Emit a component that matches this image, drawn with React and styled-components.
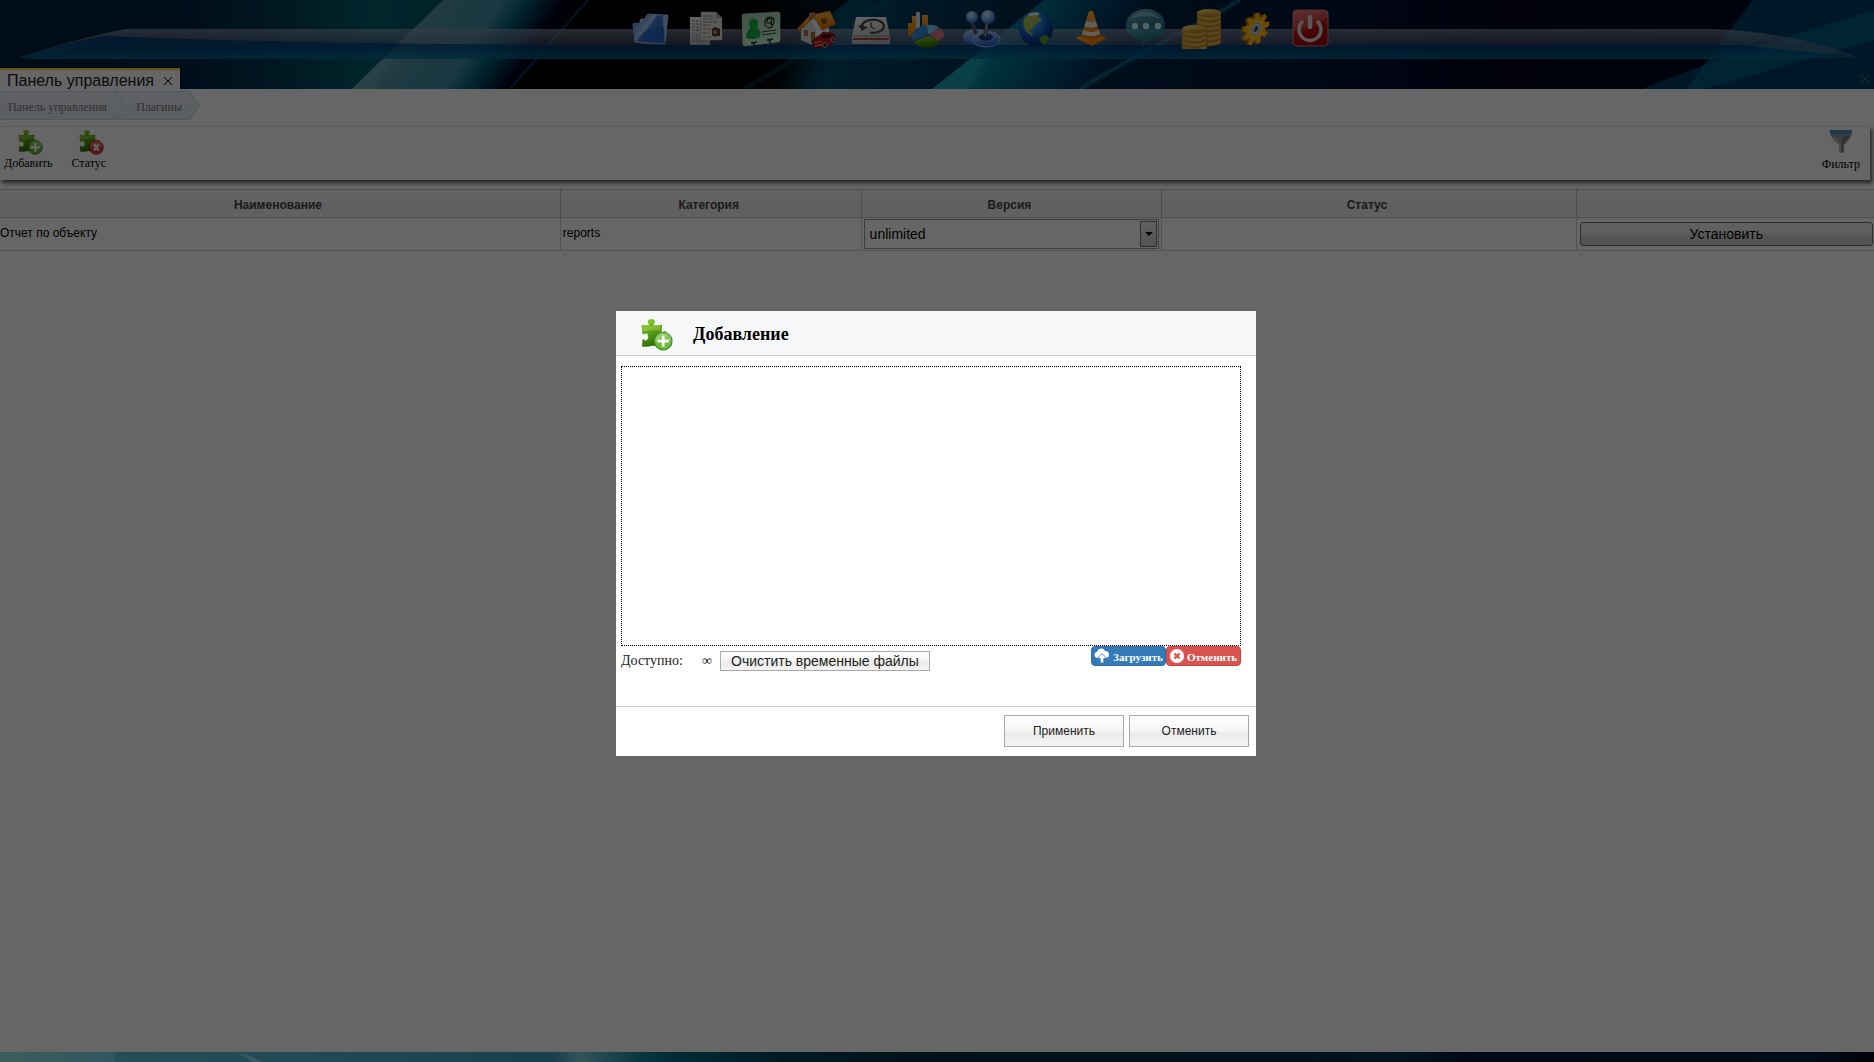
import React from "react";
import styled, { createGlobalStyle } from "styled-components";

const sans = '"Liberation Sans", Arial, sans-serif';
const serif = '"Liberation Serif", "Times New Roman", serif';

const GlobalStyle = createGlobalStyle`
  *, *::before, *::after { box-sizing: border-box; }
  body { margin: 0; font-family: ${serif}; font-size: 12px; overflow: hidden; }
  button, select { font-family: ${sans}; color: #000; margin: 0; }
`;

const Desktop = styled.div`
  display: flex;
  flex-direction: column;
  height: 100vh;
  background: #001e3c;
`;

const Header = styled.header`
  display: grid;
  height: 89px;
  flex: none;
  > * { grid-area: 1 / 1; min-width: 0; }
`;

const Backdrop = styled.svg`
  display: block;
  width: 100%;
  height: ${(p) => p.$height}px;
`;

const HeaderContent = styled.div`
  display: flex;
  flex-direction: column;
  justify-content: space-between;
  z-index: 1;
`;

const Dock = styled.nav`
  display: flex;
  justify-content: center;
  gap: 15px;
  padding: 9px 0 0 88px;
`;

const DockLink = styled.a`
  display: block;
  width: 40px;
  height: 40px;
  svg { display: block; }
`;

const TabBar = styled.div`
  display: flex;
  justify-content: space-between;
  align-items: center;
  height: 21px;
`;

const Tab = styled.div`
  display: flex;
  align-items: center;
  gap: 8px;
  height: 23px;
  margin-bottom: -2px;
  padding: 0 6px 0 7px;
  border-top: 2px solid #ffcc33;
  background: #fff;
  color: #222;
  font: 16px/20px ${sans};
  white-space: nowrap;
`;

const CloseButton = styled.button`
  display: grid;
  place-items: center;
  width: 12px;
  height: 12px;
  padding: 0;
  border: 0;
  background: none;
  color: ${(p) => p.$color || "#000"};
  margin-right: ${(p) => (p.$edge ? 3 : 0)}px;
`;

const Main = styled.main`
  flex: 1;
  min-height: 0;
  background: #fff;
`;

const Crumbs = styled.nav`
  display: flex;
  padding-top: 2px;
  height: 37px;
`;

const crumbShape = "polygon(0 0, calc(100% - 10px) 0, 100% 50%, calc(100% - 10px) 100%, 0 100%)";

const Crumb = styled.a`
  display: block;
  height: 29px;
  margin-right: -10px;
  padding: 1px;
  padding-left: 0;
  position: relative;
  z-index: ${(p) => p.$level};
  background: #c6dcef;
  clip-path: ${crumbShape};
  text-decoration: none;
  span {
    display: block;
    height: 27px;
    padding: 2px 17px 0 ${(p) => (p.$first ? 8 : 21)}px;
    background: linear-gradient(#eef3f8, #e2eaf2);
    clip-path: ${crumbShape};
    color: #777;
    font: 12px/26px ${serif};
    white-space: nowrap;
  }
`;

const Toolbar = styled.div`
  display: flex;
  justify-content: space-between;
  height: 54px;
  margin-right: 4px;
  padding: 3px 10px 0 4px;
  border-top: 1px solid #dbe6f2;
  background: #fff;
  box-shadow: 2px 3px 4px 0 rgba(0, 0, 0, 0.65);
`;

const ToolGroup = styled.div`
  display: flex;
  gap: 19px;
`;

const ToolButton = styled.button`
  display: flex;
  flex-direction: column;
  align-items: center;
  gap: 1px;
  padding: 0;
  border: 0;
  background: none;
  font: 12px/14px ${serif};
  svg { display: block; margin-left: ${(p) => (p.$badge ? 5 : 0)}px; }
`;

const Grid = styled.table`
  width: 100%;
  margin-top: 9px;
  border-collapse: collapse;
  table-layout: fixed;
  font: 12px/14px ${sans};
`;

const HeadCell = styled.th`
  width: ${(p) => p.$width};
  height: 28px;
  padding: 2px 4px 0 0;
  border: 1px solid #c0c4c6;
  border-width: 1px 1px 1px 0;
  background: linear-gradient(#fcfcfc, #eee 60%, #f3f3f3);
  color: #444;
  &:last-child { border-right: 0; }
`;

const Cell = styled.td`
  height: 33px;
  padding: 0 ${(p) => (p.$flush ? 1 : 2)}px;
  padding-bottom: ${(p) => (p.$text ? 2 : 0)}px;
  border: 1px solid #d0d0d0;
  border-width: 0 1px 1px 0;
  &:first-child { padding-left: 0; }
  &:last-child { border-right: 0; padding-left: 3px; }
`;

const SelectBox = styled.div`
  display: grid;
  grid-template-columns: 1fr 17px;
  height: 30px;
  padding: 1px;
  border: 1px solid #999;
`;

const VersionSelect = styled.select`
  grid-area: 1 / 1 / 2 / 3;
  appearance: none;
  width: 100%;
  height: 26px;
  padding: 0 4px;
  border: 0;
  border-radius: 0;
  background: #fff;
  font-size: 14px;
`;

const SelectArrow = styled.span`
  grid-area: 1 / 2;
  display: grid;
  place-items: center;
  border: 1px solid #777;
  background: linear-gradient(#f2f2f2, #cfcfcf);
  pointer-events: none;
  z-index: 1;
`;

const InstallButton = styled.button`
  display: block;
  width: 100%;
  height: 24px;
  padding: 0;
  border: 1px solid #707070;
  border-radius: 3px;
  background: linear-gradient(#f3f3f3, #ebebeb 50%, #dcdcdc 50%, #cdcdcd);
  font-size: 14px;
`;

const Overlay = styled.div`
  position: fixed;
  inset: 0;
  z-index: 10;
  display: flex;
  align-items: center;
  justify-content: center;
  padding-top: 4px;
  background: rgba(0, 0, 0, 0.6);
`;

const Dialog = styled.section`
  width: 640px;
  margin-right: 2px;
  background: #fff;
`;

const DialogHead = styled.header`
  display: flex;
  align-items: center;
  gap: 20px;
  height: 45px;
  padding: 4px 25px 0;
  border-bottom: 1px solid #ccc;
  background: #f6f8fa;
`;

const DialogTitle = styled.h2`
  margin: 0;
  padding-bottom: 2px;
  font: bold 18px/20px ${serif};
`;

const DialogBody = styled.div`
  height: 350px;
  padding: 10px 15px 0 5px;
`;

const DropZone = styled.div`
  height: 280px;
  border: 1px dotted #000;
`;

const UploadRow = styled.div`
  display: flex;
  align-items: flex-start;
  justify-content: space-between;
`;

const Quota = styled.div`
  display: flex;
  align-items: center;
  padding-top: 5px;
  color: #222;
  font: 14px/20px ${serif};
`;

const QuotaValue = styled.span`
  margin: 0 8px 0 19px;
`;

const PlainButton = styled.button`
  width: ${(p) => (p.$wide ? 210 : 120)}px;
  height: ${(p) => (p.$wide ? 20 : 32)}px;
  padding: 0;
  border: 1px solid #a9a9a9;
  background: linear-gradient(#fff, #f6f6f6 45%, #ebebeb 60%, #f4f4f4);
  color: #222;
  font-size: ${(p) => (p.$wide ? 14 : 12)}px;
  line-height: 16px;
  white-space: nowrap;
`;

const UploadActions = styled.div`
  display: flex;
`;

const ColorButton = styled.button`
  display: flex;
  align-items: center;
  justify-content: center;
  gap: 3px;
  width: 75px;
  height: 20px;
  padding: 0;
  border: 1px solid ${(p) => (p.$danger ? "#d43f3a" : "#2e6da4")};
  border-radius: 4px;
  background: ${(p) => (p.$danger ? "#d9534f" : "#337ab7")};
  color: #fff;
  font: bold 11px/18px ${serif};
  span { padding-top: 2px; }
  svg { flex: none; }
`;

const DialogFoot = styled.footer`
  display: flex;
  justify-content: flex-end;
  gap: 5px;
  height: 50px;
  padding: 8px 7px 0;
  border-top: 1px solid #ccc;
`;

function Defs() {
  const grads = [
    ["gBlue", "#b9dcff", "#1c5fc4"],
    ["gGreen", "#93d428", "#2c6f08"],
    ["gGold", "#ffe98a", "#c3841a"],
    ["gOrange", "#ffc04d", "#e87400"],
    ["gRed", "#ef8080", "#9c0000"],
    ["gSilver", "#ffffff", "#b5b5b5"],
    ["gTeal", "#9ce4ec", "#067a8c"],
    ["gMint", "#a8c9b0", "#c9f2d2"],
  ];
  return (
    <svg width="0" height="0" style={{ position: "absolute" }} aria-hidden="true">
      <defs>
        {grads.map(([id, a, b]) => (
          <linearGradient key={id} id={id} x1="0" y1="0" x2="0.3" y2="1">
            <stop offset="0" stopColor={a} />
            <stop offset="1" stopColor={b} />
          </linearGradient>
        ))}
        <radialGradient id="gSea" cx="0.4" cy="0.3" r="0.75">
          <stop offset="0" stopColor="#55b4ff" />
          <stop offset="0.6" stopColor="#0b50b4" />
          <stop offset="1" stopColor="#021b58" />
        </radialGradient>
        <radialGradient id="gBall" cx="0.4" cy="0.3" r="0.7">
          <stop offset="0" stopColor="#d5ecff" />
          <stop offset="1" stopColor="#2873c8" />
        </radialGradient>
        <linearGradient id="gFolder" x1="0" y1="0" x2="1" y2=".7">
          <stop offset="0" stopColor="#3f6fc0" />
          <stop offset=".5" stopColor="#a8ccf4" />
          <stop offset=".55" stopColor="#3f80d8" />
          <stop offset="1" stopColor="#2a66c4" />
        </linearGradient>
      </defs>
    </svg>
  );
}

function Coins({ x, y, n, w }) {
  return Array.from({ length: n }, (_, k) => n - 1 - k).map((k) => (
    <g key={k}>
      <path
        d={`M${x} ${y + k * 5}v4a${w / 2} 4 0 0 0 ${w} 0v-4z`}
        fill="#e0aa4a"
        stroke="#8c5c1c"
        strokeWidth=".6"
      />
      <ellipse cx={x + w / 2} cy={y + k * 5} rx={w / 2} ry="4" fill="url(#gGold)" stroke="#b98a38" strokeWidth=".6" />
    </g>
  ));
}

const gearPath = (() => {
  const pts = [];
  for (let i = 0; i < 9; i++) {
    [[-0.28, 11.5], [-0.14, 16.5], [0.14, 16.5], [0.28, 11.5]].forEach(([da, r]) => {
      const a = (i * 2 * Math.PI) / 9 + da;
      pts.push(`${(r * Math.cos(a)).toFixed(1)} ${(r * Math.sin(a)).toFixed(1)}`);
    });
  }
  return `M${pts.join("L")}Z`;
})();

const dockItems = [
  ["Файлы", (
    <>
      <path d="M9 12l1-2h5l2-4h20l-3 28H11z" fill="#a9bfec" stroke="#d4e2ff" strokeWidth=".7" />
      <path d="M2 15l8-1 7-9 15 1 2 29-30-2z" fill="url(#gFolder)" stroke="#8ebbff" />
      <path d="M5 32C10 22 20 18 33 17l1 17z" fill="#1a5cb8" opacity=".45" />
    </>
  )],
  ["Документы", (
    <>
      <path d="M4 8h20v28H4z" fill="url(#gSilver)" />
      <path d="M6 12h11M6 15h10M6 18h11M6 21h9M6 26h12M6 29h10M6 32h12" stroke="#888" strokeDasharray="3 1" />
      <path d="M15 3h15l6 6v22H15z" fill="#e7e2dc" stroke="#b5b0aa" strokeWidth=".5" />
      <path d="M30 3v6h6z" fill="#aaa" />
      <path d="M17 7h11M17 10h12M17 13h15M17 16h7M17 20h8M17 24h7M17 28h16" stroke="#888" strokeDasharray="4 1" />
      <path d="M26 20l3-2 5 2v7h-8z" fill="#503a2c" />
      <circle cx="29" cy="23" r="2" fill="#b99778" />
    </>
  )],
  ["Контакты", (
    <>
      <path d="M1 7q0-2 2-2l34-2q2 0 2 2v26q0 2-2 2l-33 4q-2 0-2-2z" fill="url(#gMint)" stroke="#c6ebce" strokeWidth=".6" />
      <ellipse cx="12.500" cy="15" rx="4.500" ry="5.500" fill="#18b34a" />
      <path d="M10 18h6q5 4 3 10-7 4-14 1 0-7 5-11z" fill="#18b34a" />
      <path d="M32 17q-5 4-8-1-1-6 4-8 6 0 5 5-1 4-3 2l1-5q-4-2-5 2 0 4 4 1" fill="none" stroke="#1e2b21" strokeWidth="1.2" />
      <path d="M21 23l14-2M21 26l14-2" stroke="#28452f" strokeWidth="1" />
      <path d="M10 34l6-1m-3 0v4M26 31l6-1m-3 0v4" stroke="#1f3324" strokeWidth="1.600" />
    </>
  )],
  ["Имущество", (
    <>
      <path d="M5 18l13-9 15 10v14l-14 4L5 31z" fill="#f4f4f4" />
      <path d="M5 18l9-8 6 10v17L5 31z" fill="#d8d8d8" />
      <path d="M1 20L14 6l20-4 6 13-14 6-8-13L3 22z" fill="url(#gOrange)" stroke="#9c5300" strokeWidth=".6" />
      <path d="M13 4l6-1v5l-6 3z" fill="#c07a4c" />
      <circle cx="28" cy="12" r="3" fill="#7b5a2a" />
      <path d="M8 21h4v6H8zM15 23h4v10h-4z" fill="#a0703a" />
      <path d="M16 34q1-5 7-7l4-4 9 1q5 3 3 8l-8 6-13 1z" fill="#b81818" stroke="#5a0000" strokeWidth=".6" />
      <path d="M26 26l8-1 2 3-10 2z" fill="#291010" />
      <path d="M18 34l8-2M19 37l9-2" stroke="#e49a9a" />
      <circle cx="29" cy="36" r="2.300" fill="#222" stroke="#ccc" strokeWidth=".8" />
      <circle cx="37" cy="31" r="2" fill="#222" stroke="#ccc" strokeWidth=".8" />
    </>
  )],
  ["Резервное копирование", (
    <>
      <path d="M5 8h30l4 19v7q0 1-1 1H2q-1 0-1-1v-7z" fill="url(#gSilver)" />
      <path d="M2 29h36v2H2z" fill="#a04848" />
      <path d="M1 27h38" stroke="#8a8a8a" />
      <path d="M12 20a11 6.500 0 1 1 7 3.500" fill="none" stroke="#444" strokeWidth="2.200" />
      <path d="M7 16l4 6 6-4z" fill="#444" />
      <path d="M20 13v5l4 2" fill="none" stroke="#444" strokeWidth="1.2" />
    </>
  )],
  ["Отчёты", (
    <>
      <path d="M2 14h5v13H2zM6 7h6v18H6zM16 6h6v12h-6z" fill="url(#gOrange)" />
      <path d="M10 4q2-3 4 0v16h-4z" fill="#dfe4ec" />
      <path d="M6 26q3-9 14-10l2 9-14 6q-3-2-2-5z" fill="#2f91dc" />
      <path d="M20 16q10-1 13 3l-10 7z" fill="#7dc8f0" />
      <path d="M24 26l10-7q5 4 4 9l-6 4z" fill="#e0788a" />
      <path d="M9 32l14-5 10 5v3q-6 4-13 4-8-1-11-5z" fill="url(#gGreen)" />
    </>
  )],
  ["Игры", (
    <>
      <ellipse cx="15" cy="28" rx="13" ry="8" fill="url(#gBlue)" />
      <ellipse cx="25" cy="30" rx="14" ry="8" fill="url(#gBlue)" stroke="#8cb8f0" />
      <ellipse cx="25" cy="28" rx="7" ry="3.500" fill="#173c74" />
      <path d="M11 12l4 13M26 14l-2 14" stroke="#4b5664" strokeWidth="4" />
      <path d="M26 14l-2 13" stroke="#b9c4d0" strokeWidth="1" />
      <circle cx="11" cy="8" r="6" fill="url(#gBall)" />
      <circle cx="27" cy="8" r="7" fill="url(#gBall)" />
    </>
  )],
  ["Интернет", (
    <>
      <circle cx="20" cy="20" r="17" fill="url(#gSea)" />
      <path d="M8 9q8-6 15-4l-1 3 4 2-3 3-4 2-2 5-5 1 5 4-1 2-5-4q-5-5-3-14z" fill="#a8be51" />
      <path d="M25 27l5-1 4 3q-3 5-7 7l-4-5z" fill="#539b32" />
      <path d="M12 5q6-3 12-1l-2 2-9 1z" fill="#e6f1f5" />
    </>
  )],
  ["Медиа", (
    <>
      <path d="M4 29l8-3h16l8 3-15 8z" fill="url(#gOrange)" stroke="#b35a00" strokeWidth=".6" />
      <path d="M18 2h4l8 26q-10 6-20 0z" fill="url(#gOrange)" />
      <path d="M15.500 12q4.500 2 9 0l2 5q-6 3-13 0zM12 21q8 4 16 0l1 4q-9 4-18 0z" fill="#eee" />
    </>
  )],
  ["Сообщения", (
    <>
      <path d="M20 0C31 0 39 7 39 16S31 31 21 31l-4 7-1-7C7 30 0 25 0 16S9 0 20 0z" fill="url(#gTeal)" opacity=".65" />
      <path d="M4 10Q18-5 35 10 20 4 4 10z" fill="#c6f6f8" opacity=".35" />
      <g fill="#d5f2f2"><circle cx="9" cy="17" r="3.2" /><circle cx="20" cy="17" r="3.2" /><circle cx="32" cy="17" r="3.2" /></g>
    </>
  )],
  ["Финансы", (
    <>
      <Coins x={16} y={4} n={6} w={24} />
      <Coins x={1} y={20} n={4} w={25} />
    </>
  )],
  ["Настройки", (
    <g transform="translate(20 20) rotate(28) scale(.72 1.04)">
      <path d={gearPath} transform="translate(-3 1)" fill="#c27000" />
      <path d={gearPath} fill="#ffb916" stroke="#e59200" strokeWidth=".6" />
      <circle r="8" fill="#ffd75a" />
      <ellipse rx="6" ry="6" fill="#c8ced6" stroke="#999" />
      <ellipse rx="2.500" ry="3" fill="#444" />
    </g>
  )],
  ["Выход", (
    <>
      <rect x="2" y="1" width="35" height="36" rx="4" fill="url(#gRed)" stroke="#d88080" />
      <path d="M3 22Q22 22 36 8v26q0 2-2 2H5q-2 0-2-2z" fill="#b00000" opacity=".55" />
      <path d="M11 13a11 11 0 1 0 16 0" fill="none" stroke="#dcdcdc" strokeWidth="3.4" strokeLinecap="round" />
      <path d="M19 8v10" stroke="#dcdcdc" strokeWidth="4.4" strokeLinecap="round" />
    </>
  )],
];

function HeaderArt() {
  return (
    <Backdrop $height={89} viewBox="0 0 1874 89" preserveAspectRatio="none" aria-hidden="true">
      <defs>
        <linearGradient id="sky" x1="0" x2="1874" y1="0" y2="0" gradientUnits="userSpaceOnUse">
          <stop offset="0" stopColor="#002038" />
          <stop offset=".1" stopColor="#002444" />
          <stop offset=".15" stopColor="#003c54" />
          <stop offset=".2" stopColor="#00606f" />
          <stop offset=".25" stopColor="#004c60" />
          <stop offset=".29" stopColor="#000" />
          <stop offset=".4" stopColor="#000" />
          <stop offset=".44" stopColor="#00131f" />
          <stop offset=".58" stopColor="#002444" />
          <stop offset=".68" stopColor="#001838" />
          <stop offset=".8" stopColor="#000420" />
          <stop offset="1" stopColor="#000a24" />
        </linearGradient>
        <linearGradient id="beam" x1="395" y1="40" x2="515" y2="118" gradientUnits="userSpaceOnUse">
          <stop offset="0" stopColor="#6ca4b8" />
          <stop offset=".1" stopColor="#5594a8" />
          <stop offset=".2" stopColor="#4b8ea2" />
          <stop offset=".48" stopColor="#408ca2" />
          <stop offset=".62" stopColor="#005f78" />
          <stop offset=".84" stopColor="#00001e" />
          <stop offset="1" stopColor="#000" />
        </linearGradient>
        <linearGradient id="haze" x1="790" y1="40" x2="1000" y2="100" gradientUnits="userSpaceOnUse">
          <stop offset="0" stopColor="#004a68" stopOpacity="0" />
          <stop offset=".2" stopColor="#004a68" />
          <stop offset="1" stopColor="#002848" />
        </linearGradient>
        <linearGradient id="sweep" x1="988" y1="44" x2="1110" y2="110" gradientUnits="userSpaceOnUse">
          <stop offset="0" stopColor="#1aa0b8" />
          <stop offset=".08" stopColor="#007e9c" />
          <stop offset=".3" stopColor="#006484" />
          <stop offset=".7" stopColor="#003860" />
          <stop offset="1" stopColor="#002448" stopOpacity="0" />
        </linearGradient>
        <linearGradient id="shelfTop" x1="0" x2="0" y1="0" y2="1">
          <stop offset="0" stopColor="#8a95ad" stopOpacity=".7" />
          <stop offset=".5" stopColor="#64708c" stopOpacity=".55" />
          <stop offset="1" stopColor="#5c6a88" stopOpacity=".5" />
        </linearGradient>
        <linearGradient id="shelfLow" x1="0" x2="0" y1="0" y2="1">
          <stop offset="0" stopColor="#002c5c" stopOpacity=".8" />
          <stop offset=".5" stopColor="#004884" stopOpacity=".8" />
          <stop offset="1" stopColor="#007090" stopOpacity=".75" />
        </linearGradient>
      </defs>
      <path d="M0 0h1874v89H0z" fill="url(#sky)" />
      <path d="M443 0h145l-78 89H352z" fill="url(#beam)" />
      <path d="M588 0h100l-78 89H510z" fill="#000" />
      <path d="M588 0l-78 89" stroke="#003c64" strokeWidth="2" />
      <path d="M850 0h194L932 89H725z" fill="url(#haze)" />
      <path d="M890 0L745 89" stroke="#006080" strokeWidth="5" opacity=".35" />
      <path d="M1044 0h190L1080 89H932z" fill="url(#sweep)" />
      <path d="M1240 0C1200 24 1140 52 1080 89" stroke="#00708c" strokeWidth="6" fill="none" opacity=".4" />
      <path d="M1240 0C1200 24 1140 52 1080 89" stroke="#1890a8" strokeWidth="1" fill="none" />
      <path d="M1753 0h121v89h-187q30-44 66-89z" fill="#005078" opacity=".75" />
      <path d="M1874 11v78h-232q110-44 232-78z" fill="#007ea4" opacity=".45" />
      <path d="M1874 40v49h-170z" fill="#001c44" opacity=".5" />
      <path d="M20 57Q78 38 125 29H1715Q1790 32 1858 57L1740 45H100z" fill="url(#shelfTop)" />
      <path d="M20 57Q70 42 105 36Q300 44 560 45H1730L1858 57 1780 59H30z" fill="url(#shelfLow)" />
    </Backdrop>
  );
}

function FooterArt() {
  return (
    <Backdrop $height={10} viewBox="0 0 1874 10" preserveAspectRatio="none" aria-hidden="true">
      <defs>
        <linearGradient id="floor" x1="0" x2="1" y1="0" y2="0">
          <stop offset="0" stopColor="#96e8e6" />
          <stop offset=".06" stopColor="#7cd8ee" />
          <stop offset=".062" stopColor="#5cc2d6" />
          <stop offset=".2" stopColor="#4cb4d4" />
          <stop offset=".295" stopColor="#419cc0" />
          <stop offset=".31" stopColor="#80d0e0" />
          <stop offset=".34" stopColor="#1c8aa0" />
          <stop offset=".36" stopColor="#006c84" />
          <stop offset=".42" stopColor="#004058" />
          <stop offset=".5" stopColor="#002c44" />
          <stop offset=".75" stopColor="#00304c" />
          <stop offset=".78" stopColor="#001a40" />
          <stop offset=".97" stopColor="#001e40" />
          <stop offset="1" stopColor="#000414" />
        </linearGradient>
      </defs>
      <path d="M0 0h1874v10H0z" fill="url(#floor)" />
      <path d="M232 0q20 3 30 10h-10q-6-6-20-10z" fill="#90e0ec" />
    </Backdrop>
  );
}

function Cross({ size }) {
  return (
    <svg width={size} height={size} viewBox="0 0 10 10" aria-hidden="true">
      <path d="M1 1l8 8M9 1L1 9" stroke="currentColor" strokeWidth="1" />
    </svg>
  );
}

function Puzzle({ size, kind }) {
  const add = kind === "add";
  return (
    <svg width={size} height={size} viewBox="0 0 30 31" aria-hidden="true">
      <path
        d="M0 5.500q4 1 7 .5c1-1-1-2-1-3.200 0-3.700 7-3.700 7 0 0 1.200-2 2.200-1 3.200q4 .5 8-.5l-.5 7c1 1 2-.8 4-.8v8l-8 7q-3-1-6-.5-4 1-9 .5l.5-7c1-1 2 .5 3 .3 2.500-.5 2.500-5 0-5.300-1-.1-2 1.300-3 .3z"
        fill="url(#gGreen)"
      />
      <path d="M1 7h18l-1 4Q8 11 1 12z" fill="#c5ef6a" opacity=".3" />
      <path d="M0 14q2 1 4 0t2.500 3T3 21z" fill="#fff" opacity=".75" />
      <circle cx="21" cy="21.500" r="8.600" fill={add ? "#6dba3c" : "#d23a3a"} stroke={add ? "#3b8a1c" : "#a51212"} />
      <path d="M13 21a8 8 0 0 1 16 0q-8 3-16 0z" fill="#fff" opacity=".22" />
      <path
        d={add ? "M21 16v11M15.500 21.500h11" : "M18 17.500l6 8M24 17.500l-6 8"}
        stroke="#fff"
        strokeWidth="2.600"
      />
    </svg>
  );
}

function Funnel() {
  return (
    <svg width="24" height="26" viewBox="0 0 24 26" aria-hidden="true">
      <path d="M1 3h22q0 4-8 12v7q-3 2-5 0v-7Q1 7 1 3z" fill="#9b9fa2" />
      <path d="M13 6h8l-7 9v7l-2 1z" fill="#75797c" />
      <path d="M5 7l6 8v7" stroke="#d5d8da" fill="none" />
      <path d="M1 0h22v3q-11 4-22 0z" fill="#4a93b5" />
    </svg>
  );
}

function CloudUp() {
  return (
    <svg width="16" height="15" viewBox="0 0 16 15" aria-hidden="true">
      <path d="M3.500 10A3.200 3.200 0 0 1 3 3.700 4.300 4.300 0 0 1 11 3a3.600 3.600 0 0 1 1.500 7z" fill="#fff" />
      <path d="M8 5.500l5 5H9.800V15H6.200v-4.500H3z" fill="#fff" stroke="#337ab7" strokeWidth=".9" />
    </svg>
  );
}

function CancelMark() {
  return (
    <svg width="14" height="14" viewBox="0 0 14 14" aria-hidden="true">
      <circle cx="7" cy="7" r="7" fill="#fff" />
      <path d="M4.500 4.500l5 5M9.500 4.500l-5 5" stroke="#d9534f" strokeWidth="2.400" />
    </svg>
  );
}

export default function App() {
  return (
    <>
      <GlobalStyle />
      <Defs />
      <Desktop>
        <Header>
          <HeaderArt />
          <HeaderContent>
            <Dock aria-label="Меню">
              {dockItems.map(([name, art]) => (
                <DockLink key={name} href="#" aria-label={name}>
                  <svg width="40" height="40" viewBox="0 0 40 40">{art}</svg>
                </DockLink>
              ))}
            </Dock>
            <TabBar>
              <Tab>
                Панель управления
                <CloseButton aria-label="Закрыть вкладку"><Cross size={10} /></CloseButton>
              </Tab>
              <CloseButton $color="#3a5a70" $edge aria-label="Закрыть"><Cross size={12} /></CloseButton>
            </TabBar>
          </HeaderContent>
        </Header>
        <Main>
          <Crumbs>
            <Crumb href="#" $first $level={2}><span>Панель управления</span></Crumb>
            <Crumb href="#" $level={1}><span>Плагины</span></Crumb>
          </Crumbs>
          <Toolbar>
            <ToolGroup>
              <ToolButton $badge><Puzzle size={25} kind="add" />Добавить</ToolButton>
              <ToolButton $badge><Puzzle size={25} kind="status" />Статус</ToolButton>
            </ToolGroup>
            <ToolButton><Funnel />Фильтр</ToolButton>
          </Toolbar>
          <Grid>
            <thead>
              <tr>
                <HeadCell $width="29.9%">Наименование</HeadCell>
                <HeadCell $width="16.05%">Категория</HeadCell>
                <HeadCell $width="16.05%">Версия</HeadCell>
                <HeadCell $width="22.1%">Статус</HeadCell>
                <HeadCell $width="15.9%" aria-label="Действие" />
              </tr>
            </thead>
            <tbody>
              <tr>
                <Cell $text>Отчет по объекту</Cell>
                <Cell $text>reports</Cell>
                <Cell>
                  <SelectBox>
                    <VersionSelect aria-label="Версия" defaultValue="unlimited">
                      <option>unlimited</option>
                    </VersionSelect>
                    <SelectArrow>
                      <svg width="8" height="4" viewBox="0 0 8 4" aria-hidden="true"><path d="M0 0h8L4 4z" /></svg>
                    </SelectArrow>
                  </SelectBox>
                </Cell>
                <Cell />
                <Cell $flush><InstallButton>Установить</InstallButton></Cell>
              </tr>
            </tbody>
          </Grid>
        </Main>
        <FooterArt />
      </Desktop>
      <Overlay>
        <Dialog role="dialog" aria-modal="true" aria-labelledby="dialog-title">
          <DialogHead>
            <Puzzle size={32} kind="add" />
            <DialogTitle id="dialog-title">Добавление</DialogTitle>
          </DialogHead>
          <DialogBody>
            <DropZone />
            <UploadRow>
              <Quota>
                Доступно:
                <QuotaValue>∞</QuotaValue>
                <PlainButton $wide>Очистить временные файлы</PlainButton>
              </Quota>
              <UploadActions>
                <ColorButton><CloudUp /><span>Загрузить</span></ColorButton>
                <ColorButton $danger><CancelMark /><span>Отменить</span></ColorButton>
              </UploadActions>
            </UploadRow>
          </DialogBody>
          <DialogFoot>
            <PlainButton>Применить</PlainButton>
            <PlainButton>Отменить</PlainButton>
          </DialogFoot>
        </Dialog>
      </Overlay>
    </>
  );
}
